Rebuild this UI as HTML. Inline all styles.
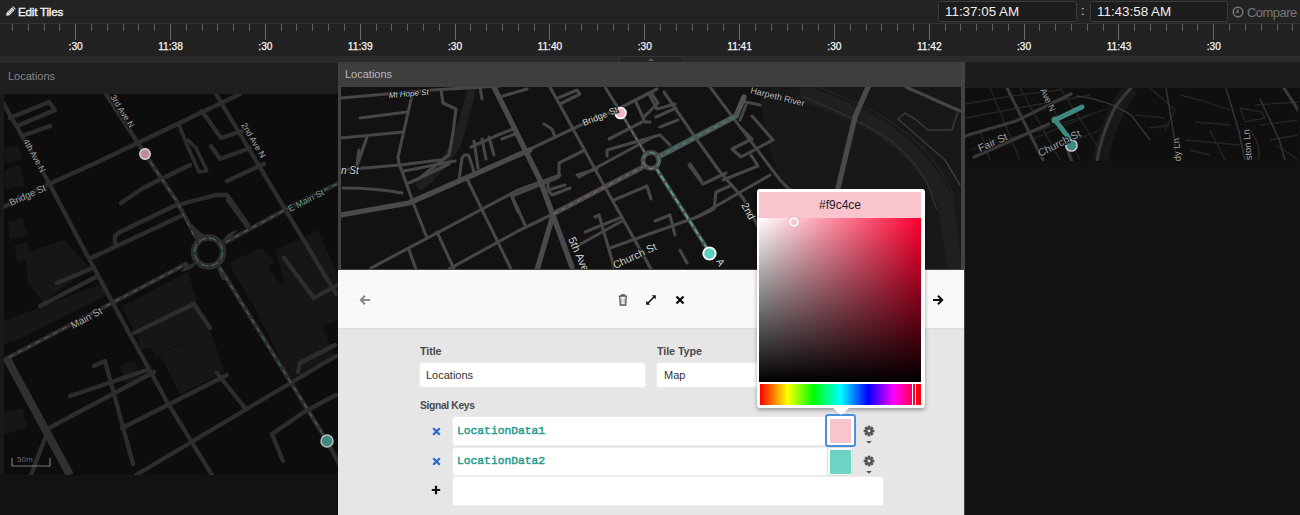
<!DOCTYPE html>
<html><head><meta charset="utf-8">
<style>
*{margin:0;padding:0;box-sizing:border-box}
html,body{width:1300px;height:515px;overflow:hidden;background:#1b1b1b;font-family:"Liberation Sans",sans-serif}
.a{position:absolute}
#hdr{left:0;top:0;width:1300px;height:23px;background:#232323}
#tl{left:0;top:23px;width:1300px;height:33px;background:#222;border-top:1px solid #333}
#band{left:0;top:56px;width:1300px;height:7px;background:#2b2b2b}
.tick{position:absolute;top:0;width:1px;height:7px;background:#5e5e5e}
.tick.M{height:16px;background:#6a6a6a}
.lbl{position:absolute;top:17px;font-size:10.2px;font-weight:normal;color:#f4f4f4;transform:translateX(-50%);-webkit-text-stroke:0.25px #f4f4f4}
.tbox{top:1px;height:21px;border:1px solid #3a3a3a;border-radius:2px;background:#1c1c1c;color:#eee;font-size:13.4px;padding:2px 0 0 6px}
#lp{left:0;top:63px;width:338px;height:452px;background:#121212}
#lph{left:0;top:63px;width:338px;height:31px;background:#1e1e1e}
#lmap{left:4px;top:94px;width:334px;height:381px;background:#0e0e0e;overflow:hidden}
#mp{left:338px;top:62px;width:627px;height:453px;background:#424242}
#mph{left:338px;top:62px;width:623px;height:25px;background:#3e3e3e}
#mmap{left:341px;top:87px;width:620px;height:182px;background:#121212;overflow:hidden}
#tb{left:338px;top:270px;width:626px;height:58px;background:#f9f9f9}
#form{left:338px;top:328px;width:626px;height:187px;background:#e6e6e6;box-shadow:inset 0 1px 0 #dcdcdc}
#rp{left:965px;top:62px;width:335px;height:453px;background:#121212}
#rph{left:965px;top:62px;width:335px;height:26px;background:#1d1d1d}
#rmap{left:967px;top:88px;width:333px;height:74px;background:#111;overflow:hidden}
.inp{background:#fff;border-radius:3px;box-shadow:0 0 0 1px #ececec}
.flbl{font-size:10.3px;font-weight:bold;color:#4a4a4a;letter-spacing:-0.1px}
.mono{font-family:"Liberation Mono",monospace;font-size:11.3px;font-weight:normal;color:#1f9a8c;-webkit-text-stroke:0.45px #1f9a8c}
</style></head><body>
<div id="hdr" class="a">
  <svg class="a" style="left:4px;top:5px" width="13" height="13" viewBox="0 0 13 13"><g transform="rotate(45 6.5 6.5)"><path d="M4.6 1 H8.4 V10 L6.5 12.6 L4.6 10 Z" fill="#eee"/><path d="M5.6 3.5 V9.5 M7.4 3.5 V9.5" stroke="#444" stroke-width="0.6"/><rect x="4.6" y="1.9" width="3.8" height="0.8" fill="#333"/></g></svg>
  <div class="a" style="left:18px;top:5px;font-size:11.6px;font-weight:normal;color:#f2f2f2;letter-spacing:-0.2px;-webkit-text-stroke:0.4px #f2f2f2">Edit Tiles</div>
  <div class="a tbox" style="left:938px;width:139px">11:37:05 AM</div>
  <div class="a" style="left:1081px;top:3px;font-size:13px;color:#ddd">:</div>
  <div class="a tbox" style="left:1090px;width:138px">11:43:58 AM</div>
  <svg class="a" style="left:1232px;top:6px" width="12" height="12" viewBox="0 0 12 12"><circle cx="6" cy="6" r="4.8" fill="none" stroke="#777" stroke-width="1.5"/><path d="M6 3.2 V6.2 H3.8" fill="none" stroke="#777" stroke-width="1.4"/></svg>
  <div class="a" style="left:1247px;top:5px;font-size:13px;color:#777;letter-spacing:-0.55px">Compare</div>
</div>
<div id="tl" class="a"><div class="tick" style="left:12px"></div><div class="tick" style="left:28px"></div><div class="tick" style="left:44px"></div><div class="tick" style="left:59px"></div><div class="tick M" style="left:75px"></div><div class="tick" style="left:91px"></div><div class="tick" style="left:107px"></div><div class="tick" style="left:123px"></div><div class="tick" style="left:138px"></div><div class="tick" style="left:154px"></div><div class="tick M" style="left:170px"></div><div class="tick" style="left:186px"></div><div class="tick" style="left:202px"></div><div class="tick" style="left:217px"></div><div class="tick" style="left:233px"></div><div class="tick" style="left:249px"></div><div class="tick M" style="left:265px"></div><div class="tick" style="left:281px"></div><div class="tick" style="left:296px"></div><div class="tick" style="left:312px"></div><div class="tick" style="left:328px"></div><div class="tick" style="left:344px"></div><div class="tick M" style="left:360px"></div><div class="tick" style="left:376px"></div><div class="tick" style="left:391px"></div><div class="tick" style="left:407px"></div><div class="tick" style="left:423px"></div><div class="tick" style="left:439px"></div><div class="tick M" style="left:455px"></div><div class="tick" style="left:470px"></div><div class="tick" style="left:486px"></div><div class="tick" style="left:502px"></div><div class="tick" style="left:518px"></div><div class="tick" style="left:534px"></div><div class="tick M" style="left:549px"></div><div class="tick" style="left:565px"></div><div class="tick" style="left:581px"></div><div class="tick" style="left:597px"></div><div class="tick" style="left:613px"></div><div class="tick" style="left:628px"></div><div class="tick M" style="left:644px"></div><div class="tick" style="left:660px"></div><div class="tick" style="left:676px"></div><div class="tick" style="left:692px"></div><div class="tick" style="left:707px"></div><div class="tick" style="left:723px"></div><div class="tick M" style="left:739px"></div><div class="tick" style="left:755px"></div><div class="tick" style="left:771px"></div><div class="tick" style="left:787px"></div><div class="tick" style="left:802px"></div><div class="tick" style="left:818px"></div><div class="tick M" style="left:834px"></div><div class="tick" style="left:850px"></div><div class="tick" style="left:866px"></div><div class="tick" style="left:881px"></div><div class="tick" style="left:897px"></div><div class="tick" style="left:913px"></div><div class="tick M" style="left:929px"></div><div class="tick" style="left:945px"></div><div class="tick" style="left:960px"></div><div class="tick" style="left:976px"></div><div class="tick" style="left:992px"></div><div class="tick" style="left:1008px"></div><div class="tick M" style="left:1024px"></div><div class="tick" style="left:1039px"></div><div class="tick" style="left:1055px"></div><div class="tick" style="left:1071px"></div><div class="tick" style="left:1087px"></div><div class="tick" style="left:1103px"></div><div class="tick M" style="left:1118px"></div><div class="tick" style="left:1134px"></div><div class="tick" style="left:1150px"></div><div class="tick" style="left:1166px"></div><div class="tick" style="left:1182px"></div><div class="tick" style="left:1197px"></div><div class="tick M" style="left:1213px"></div><div class="tick" style="left:1229px"></div><div class="tick" style="left:1245px"></div><div class="tick" style="left:1261px"></div><div class="tick" style="left:1277px"></div><div class="tick" style="left:1292px"></div><div class="lbl" style="left:75.7px">:30</div><div class="lbl" style="left:170.5px">11:38</div><div class="lbl" style="left:265.4px">:30</div><div class="lbl" style="left:360.2px">11:39</div><div class="lbl" style="left:455.1px">:30</div><div class="lbl" style="left:549.9px">11:40</div><div class="lbl" style="left:644.8px">:30</div><div class="lbl" style="left:739.6px">11:41</div><div class="lbl" style="left:834.4px">:30</div><div class="lbl" style="left:929.3px">11:42</div><div class="lbl" style="left:1024.1px">:30</div><div class="lbl" style="left:1119.0px">11:43</div><div class="lbl" style="left:1213.8px">:30</div></div>
<div id="band" class="a"></div>
<div class="a" style="left:619px;top:56px;width:65px;height:7px;background:#262626;border:1px solid #333;border-bottom:none"><div class="a" style="left:28px;top:1px;width:0;height:0;border-left:3px solid transparent;border-right:3px solid transparent;border-bottom:3px solid #555"></div></div>

<div id="lp" class="a"></div><div class="a" style="left:0;top:94px;width:4px;height:381px;background:#191919"></div>
<div id="lph" class="a"><div class="a" style="left:8px;top:7px;font-size:11px;color:#858585">Locations</div></div>
<div id="lmap" class="a" style="background:none"></div><!--LMAP--><svg class="a" style="left:0;top:0" width="338" height="475" viewBox="0 0 338 475">
<defs><clipPath id="lc"><rect x="4" y="94" width="334" height="381"/></clipPath></defs>
<g clip-path="url(#lc)">
<rect x="4" y="94" width="334" height="381" fill="#0e0d0d"/>
<g fill="#161616">
<path d="M141 333 L194 306 L209 330 L156 356 Z"/>
<path d="M160 355 L210 330 L225 372 L180 395 Z"/>
<path d="M251 300 L300 275 L335 356 L290 380 Z"/>
<path d="M275 250 L318 230 L338 275 L338 320 L300 335 Z"/>
<path d="M232 270 L262 256 L280 285 L250 300 Z"/>

<path d="M5 148 L18 146 L22 160 L5 163 Z"/>
<path d="M5 170 L20 165 L25 185 L5 190 Z"/>
<path d="M8 222 L22 218 L28 235 L10 240 Z"/>
<path d="M14 246 L28 242 L32 258 L18 262 Z"/>

<path d="M120 366 L135 360 L140 378 L125 384 Z"/>
<path d="M4 412 L22 408 L28 428 L4 434 Z"/>
<path d="M26 253 L64 240 L90 268 L43 302 L28 283 Z"/>
<path d="M4 321 L103 283 L107 295 L13 342 L4 344 Z"/>
<path d="M122 306 L188 272 L197 302 L133 330 Z"/>
<path d="M137 334 L192 308 L200 336 L141 350 Z"/>
<path d="M230 262 L262 248 L275 262 L240 285 Z"/>
</g>
<g fill="none" stroke="#2d2d2d" stroke-width="4.3" stroke-linecap="round" stroke-linejoin="round">
<path d="M2 101 L49 183 L79 240 L122 320 L166 400 L215 480"/>
<path d="M106 94 L145 154 L176 200 L196 237"/>
<path d="M0 209 L49 184 L100 161 L240 94"/>
<path d="M216 94 L336 294"/>
<path d="M10 118 L49 102 L55 110 L17 126"/>
<path d="M22 136 L50 126"/>
<path d="M202 111 L221 138 L248 129"/>
<path d="M211 146 L220 159 L250 148"/>
<path d="M227 181 L264 164"/>
<path d="M121 203 L143 188 L190 165"/>
<path d="M115 243 L115 236 L120 232 L174 206 L216 195 L227 195 L248 225"/>
<path d="M91 258 L181 216"/>
<path d="M57 283 L93 268"/>
<path d="M40 306 L96 277"/>
<path d="M228 200 L247 226"/>

<path d="M284 258 L314 298 L337 285"/>
<path d="M0 362 L186 264"/>
<path d="M134 333 L194 304 L210 328"/>
<path d="M49 428 L154 372"/>
<path d="M136 475 L336 356"/>
<path d="M122 428 L227 375"/>
<path d="M94 366 L105 361 L133 464"/>
<path d="M70 396 L147 370"/>
<path d="M217 373 L245 408"/>
<path d="M272 434 L304 412 L336 395"/>
<path d="M272 434 L283 461"/>
<path d="M300 363 L335 345"/>
<path d="M300 363 L298 372"/>
<path d="M220 268 L246 310 L327 441 L345 475"/>
<path d="M226 242 L292 206 L345 180"/>
<path d="M47 433 L31 475"/>
</g>
<path d="M7 359 L70 475" stroke="#303030" stroke-width="8" fill="none"/>
<g fill="none" stroke="#2d2d2d" stroke-width="3.5" stroke-linecap="round" stroke-linejoin="round">
<path d="M179 125 L187 145 L199 172 L207 171 L196 148 L188 140"/>
</g>
<circle cx="208.5" cy="252" r="14.5" fill="none" stroke="#2d2d2d" stroke-width="6.5"/>
<path d="M192 234 Q200 240 206 236 Q197 230 192 224 Z M222 242 Q226 232 238 230 L230 238 Z M216 266 Q222 270 228 280 L222 280 Z M196 262 Q194 270 180 272 L186 266 Z" fill="#2d2d2d"/>
<g fill="none" stroke-dasharray="5 5" stroke-width="1">
<path d="M0 362 L186 264" stroke="#6a6060"/>
<path d="M226 242 L292 206 L345 180" stroke="#3d7a72"/>
<path d="M220 268 L246 310 L327 441" stroke="#3d7a72"/>
<path d="M145 154 L176 200 L194 236" stroke="#6a5a5e"/>
</g>
<circle cx="208.5" cy="252" r="14" fill="none" stroke="#3d7a72" stroke-width="1" stroke-dasharray="8 3"/>
<circle cx="145" cy="154" r="5.2" fill="#c08d97" stroke="#d8d8d8" stroke-width="1.5"/>
<circle cx="327" cy="441" r="6" fill="#3d8a80" stroke="#bbb" stroke-width="1.5"/>
<g fill="#a8a8a8" font-size="9" font-family="Liberation Sans" stroke="#0e0e0e" stroke-width="2" paint-order="stroke">
<text transform="translate(11 206) rotate(-24)" font-size="9.5">Bridge St</text>
<text transform="translate(23 141) rotate(61)" font-size="8.5">4th Ave N</text>
<text transform="translate(110 97) rotate(58)" font-size="8.5">3rd Ave N</text>
<text transform="translate(241 125) rotate(59)" font-size="8.5">2nd Ave N</text>
<text transform="translate(73 329) rotate(-28)" fill="#b0b0b0" font-size="10">Main St</text>
<text transform="translate(290 212) rotate(-27)" fill="#7a9a96" font-size="9">E Main St</text>
</g>
<path d="M12 458 V466 H50 V458" fill="none" stroke="#777" stroke-width="1.2"/>
<text x="17" y="462" fill="#666" font-size="8" font-family="Liberation Sans">50m</text>
</g>
</svg>
<!--/LMAP-->


<div id="rp" class="a"></div>
<div id="rph" class="a"></div>
<div id="rmap" class="a"></div><!--RMAP--><svg class="a" style="left:0;top:0" width="1300" height="165" viewBox="0 0 1300 165">
<defs><clipPath id="rc"><rect x="965" y="88" width="333" height="73"/></clipPath></defs>
<g clip-path="url(#rc)">
<rect x="965" y="88" width="335" height="73" fill="#0f0f0f"/>
<path d="M1131 88 Q1110 115 1100 160" stroke="#181818" stroke-width="16" fill="none"/>
<g fill="none" stroke="#262626" stroke-width="1.3">
<path d="M965 104 L1010 96 L1060 90"/>
<path d="M965 118 L1040 104 L1090 95"/>
<path d="M970 150 L1050 127 L1110 108"/>
<path d="M1020 88 L1060 160"/>
<path d="M1042 88 L1080 160"/>
<path d="M1060 88 L1100 150"/>
<path d="M990 88 L1020 160"/>
<path d="M980 130 L990 160"/>
<path d="M1030 140 L1090 115"/>
<path d="M1040 155 L1100 130"/>
<path d="M1150 88 L1175 110 L1165 130"/>
<path d="M1180 95 L1200 100 L1230 110"/>
<path d="M1195 122 L1230 125"/>
<path d="M1185 140 L1240 145"/>
<path d="M1210 130 L1225 160"/>
<path d="M1240 108 L1262 112 L1265 118 L1245 122 L1240 108"/>
<path d="M1255 105 L1298 102"/>
<path d="M1260 125 L1298 120"/>
<path d="M1270 140 L1298 135"/>
<path d="M1250 130 Q1262 145 1258 160"/>
<path d="M1275 145 Q1285 150 1298 160"/>
<path d="M1135 115 L1165 118"/>
<path d="M1150 128 L1170 125"/>
<path d="M1190 150 L1210 155"/>
</g>
<g fill="none" stroke="#333" stroke-width="1.6">
<path d="M1166 88 L1174 136 L1176 160"/>
<path d="M1226 88 L1239 132 L1245 160"/>
<path d="M1260 99 L1279 139 L1285 160"/>
<path d="M1076 96 Q1110 100 1132 116 L1150 140"/>
</g>
<g fill="none" stroke="#393939" stroke-width="3.2" stroke-linecap="round">
<path d="M1007 88 L1044 162"/>
<path d="M965 136 L1016 121 L1071 94"/>
<path d="M974 157 L1049 124"/>
<path d="M1131 88 Q1115 105 1111 116 Q1100 140 1097 161"/>
<path d="M1284 88 L1298 110"/>
<path d="M1064 140 L1072 162"/>
</g>
<path d="M1082 107 L1055 120 L1069 138 L1071.5 145" stroke="#3f8a80" stroke-width="4.8" fill="none" stroke-linecap="round" stroke-linejoin="round"/>
<circle cx="1055" cy="120" r="3.6" fill="#3f8a80"/><circle cx="1071.5" cy="145.5" r="5.6" fill="#3f8a80" stroke="#ccc" stroke-width="1.5"/>
<g fill="#a0a0a0" font-size="10.5" font-family="Liberation Sans" stroke="#0f0f0f" stroke-width="2" paint-order="stroke">
<text transform="translate(980 152) rotate(-24)">Fair St</text>
<text transform="translate(1040 157) rotate(-27)">Church St</text>
<text transform="translate(1040 90) rotate(65)" font-size="9">Ave N</text>
<text transform="translate(1181 161) rotate(-95)" font-size="9.5">dy Ln</text>
<text transform="translate(1252 160) rotate(-95)" font-size="9.5">ston Ln</text>
</g>
</g>
</svg>
<!--/RMAP-->

<div id="mp" class="a"></div>
<div id="mph" class="a"><div class="a" style="left:7px;top:6px;font-size:11px;color:#b8b8b8">Locations</div></div>
<div id="mmap" class="a"></div><!--MMAP--><svg class="a" style="left:0;top:0" width="965" height="272" viewBox="0 0 965 272">
<defs><clipPath id="mc"><rect x="341" y="87" width="620" height="182"/></clipPath></defs>
<g clip-path="url(#mc)">
<rect x="341" y="87" width="620" height="182" fill="#121212"/>
<path d="M472 86 Q465 120 456 145 Q440 170 418 188" stroke="#1f1f1f" stroke-width="9" fill="none"/>
<path d="M760 87 L961 87 L961 269 L800 269 Q790 200 770 150 Q760 110 760 87 Z" fill="#181818"/>
<path d="M800 92 Q850 110 880 128 Q925 158 945 200 L955 269" stroke="#1f1f1f" stroke-width="16" fill="none"/>
<path d="M804 97 Q860 120 890 140 Q920 165 930 190 L937 210" stroke="#2e2e2e" stroke-width="1.5" fill="none"/>
<path d="M815 86 Q870 105 905 132 Q940 160 955 200" stroke="#242424" stroke-width="1.2" fill="none"/>
<g fill="none" stroke="#464646" stroke-width="3.1" stroke-linecap="round" stroke-linejoin="round">
<path d="M341 98 L432 90 L500 86"/>
<path d="M412 95 L398 157 L399 163 L414 205 L427 238"/>
<path d="M360 118 L407 112"/>
<path d="M341 138 L403 132"/>
<path d="M367 137 L357 166"/>
<path d="M341 170 L400 165 L440 160"/>
<path d="M343 188 Q375 188 402 193"/>
<path d="M404 171 L455 161"/>
<path d="M409 183 L449 164"/>
<path d="M441 90 L443 103 L456 109 L453 133 L449 155 L417 180"/>
<path d="M359 150 L357 164"/>
<path d="M459 180 L462 158 Q465 153 469 156 L474 172 M474 141 L478 168 M482 139 L486 159 M489 137 L494 155 M471 147 L498 135"/>
<path d="M480 87 L482 99"/>
<path d="M468 181 L511 269"/>
<path d="M371 268 L518 190 L560 175"/>
<path d="M528 150 L583 124 L618 109 L657 89"/>
<path d="M437 232 L454 269"/>
<path d="M409 250 L416 269"/>
<path d="M449 269 L518 231 L553 214"/>
<path d="M511 195 L518 212"/>
<path d="M503 96 L527 89"/>
<path d="M558 98 L577 90 L580 94 L560 104"/>
<path d="M544 124 L552 129 L555 137"/>
<path d="M498 135 L513 129"/>
<path d="M502 139 L515 134"/>
<path d="M550 87 L601 180 L651 269"/>
<path d="M559 177 L559 163 L585 150"/>
<path d="M579 177 L653 137"/>
<path d="M609 139 L642 122"/>
<path d="M607 156 L607 150 L660 135 L670 145"/>
<path d="M635 100 L645 122 L650 122"/>
<path d="M649 94 L657 109 L675 104"/>
<path d="M660 127 L678 120"/>
<path d="M512 196 L525 225"/>
<path d="M512 196 L557 178"/>
<path d="M548 180 L548 190 L565 185 M548 190 L552 195 L570 188"/>
<path d="M614 200 L647 186 L651 199"/>
<path d="M577 175 L597 169"/>
<path d="M577 246 L622 221"/>
<path d="M585 232 L622 217"/>
<path d="M595 217 L599 215 L614 267"/>
<path d="M610 248 L697 217 L770 175"/>
<path d="M655 221 L670 215 L675 235"/>
<path d="M697 217 L714 209 L716 192 L730 186"/>
<path d="M680 250 L687 263"/>
<path d="M689 165 L703 184 L726 173"/>
<path d="M664 92 L695 137 L720 172 L743 198 L760 230"/>
<path d="M710 87 L780 180 L800 200"/>
<path d="M746 105 L740 120"/>
<path d="M745 102 L760 105"/>
<path d="M752 116 L773 140 L741 157 L732 149 L752 139 L740 127"/>
<path d="M751 155 L758 166 L723 180"/>
<path d="M690 164 L701 180"/>
<path d="M640 98 L651 92 M651 92 L658 103 L651 110 L644 117 M656 117 L676 108"/>
<path d="M906 87 L960 111"/>
<path d="M898 119 L905 113 L915 119 L928 130 L952 130 L958 111" stroke="#3a3a3a" stroke-width="1.5"/><path d="M898 119 L945 160 L960 185" stroke="#3a3a3a" stroke-width="1.5"/>

</g>
<g fill="none" stroke="#4a4a4a" stroke-width="5.3" stroke-linecap="round" stroke-linejoin="round">
<path d="M494 87 L540 180 L572 267"/>
<path d="M341 215 L409 203 L518 155 L530 150"/>
<path d="M553 215 L537 270"/>
<path d="M868 87 L855 117 L838 188 L834 200"/>
</g>
<path d="M553 214 L643 167" stroke="#4a4848" stroke-width="5" fill="none"/>
<path d="M553 214 L643 167" stroke="#8a7378" stroke-width="1" stroke-dasharray="5 4" fill="none"/>
<path d="M605 87 L621 113 L645 153" stroke="#4a4848" stroke-width="3" fill="none"/>
<path d="M621 113 L645 153" stroke="#8a7378" stroke-width="1" stroke-dasharray="4 3" fill="none"/>
<path d="M658 157 L736 116 L744 97" stroke="#4d5554" stroke-width="5.5" fill="none" stroke-linecap="round"/>
<path d="M658 157 L736 116" stroke="#3f8a80" stroke-width="1.2" stroke-dasharray="5 4" fill="none"/>
<path d="M656 168 L710 253" stroke="#4d5554" stroke-width="4" fill="none"/>
<path d="M656 168 L710 253" stroke="#55b8a8" stroke-width="1.2" stroke-dasharray="6 3" fill="none"/>
<circle cx="651" cy="160.5" r="8" fill="none" stroke="#4a4a4a" stroke-width="5"/>
<circle cx="651" cy="160.5" r="8" fill="none" stroke="#5a9a90" stroke-width="1" stroke-dasharray="6 3"/>
<circle cx="620.5" cy="113" r="5.5" fill="#f4b8c4" stroke="#fff" stroke-width="1.6"/>
<circle cx="709.5" cy="253.5" r="6.2" fill="#5ccfc0" stroke="#fff" stroke-width="1.8"/>
<g fill="#d4d4d4" font-size="8.5" font-family="Liberation Sans" stroke="#111" stroke-width="2" paint-order="stroke">
<text transform="translate(389 98) rotate(-5)" font-style="italic" font-size="8">Mt Hope St</text>
<text x="341" y="174" font-size="10" font-style="italic">n St</text>
<text transform="translate(584 126) rotate(-22)" font-size="9">Bridge St</text>
<text transform="translate(750 93) rotate(14)" font-size="9" fill="#bbb">Harpeth River</text>
<text transform="translate(568 239) rotate(66)" font-size="11">5th Ave</text>
<text transform="translate(615 269) rotate(-25)" font-size="10.5">Church St</text>
<text transform="translate(741 205) rotate(62)" font-size="10.5">2nd</text>
<text transform="translate(716 261) rotate(62)" font-size="10">A</text>
</g>
</g>
</svg>
<!--/MMAP-->
<div id="tb" class="a">
  <svg class="a" style="left:21px;top:24px" width="12" height="12" viewBox="0 0 12 12"><path d="M11 6 H2 M6 1.8 L1.8 6 L6 10.2" fill="none" stroke="#888" stroke-width="2"/></svg>
  <svg class="a" style="left:280px;top:24px" width="10" height="12" viewBox="0 0 10 12"><path d="M3.5 1.5 V0.8 H6.5 V1.5 M0.8 2.2 H9.2 M1.8 2.5 L2.3 11 H7.7 L8.2 2.5" fill="none" stroke="#555" stroke-width="1.3"/><path d="M3.8 4.5 V9.5 M6.2 4.5 V9.5" stroke="#999" stroke-width="0.9"/></svg>
  <svg class="a" style="left:307px;top:24px" width="12" height="12" viewBox="0 0 12 12"><path d="M2.5 9.5 L9.5 2.5" stroke="#111" stroke-width="1.6"/><path d="M6.8 1.2 H10.8 V5.2 Z M1.2 6.8 V10.8 H5.2 Z" fill="#111"/></svg>
  <svg class="a" style="left:337px;top:25px" width="10" height="10" viewBox="0 0 10 10"><path d="M1.5 1.5 L8.5 8.5 M8.5 1.5 L1.5 8.5" stroke="#111" stroke-width="2.3"/></svg>
  <svg class="a" style="left:594px;top:24px" width="12" height="12" viewBox="0 0 12 12"><path d="M1 6 H10 M6 1.8 L10.2 6 L6 10.2" fill="none" stroke="#111" stroke-width="2"/></svg>
</div>
<div id="form" class="a">
  <div class="a flbl" style="left:82px;top:17px;font-size:10.8px">Title</div>
  <div class="a inp" style="left:82px;top:35px;width:225px;height:24px"><div class="a" style="left:6px;top:6px;font-size:11px;color:#333">Locations</div></div>
  <div class="a flbl" style="left:319px;top:17px;font-size:10.8px">Tile Type</div>
  <div class="a inp" style="left:319px;top:35px;width:120px;height:24px"><div class="a" style="left:7px;top:6px;font-size:11px;color:#333">Map</div></div>
  <div class="a flbl" style="left:82px;top:72px;letter-spacing:-0.35px">Signal Keys</div>
  <svg class="a" style="left:94px;top:99px" width="9" height="9" viewBox="0 0 9 9"><path d="M1.2 1.2 L7.8 7.8 M7.8 1.2 L1.2 7.8" stroke="#2a6ad0" stroke-width="2.2"/></svg>
  <svg class="a" style="left:94px;top:129px" width="9" height="9" viewBox="0 0 9 9"><path d="M1.2 1.2 L7.8 7.8 M7.8 1.2 L1.2 7.8" stroke="#2a6ad0" stroke-width="2.2"/></svg>
  <svg class="a" style="left:93px;top:157px" width="10" height="10" viewBox="0 0 10 10"><path d="M5 0.8 V9.2 M0.8 5 H9.2" stroke="#111" stroke-width="2.2"/></svg>
  <div class="a inp" style="left:115px;top:89px;width:375px;height:28px"><div class="a mono" style="left:4px;top:8px">LocationData1</div></div>
  <div class="a inp" style="left:115px;top:120px;width:375px;height:27px"><div class="a mono" style="left:4px;top:7px">LocationData2</div></div>
  <div class="a inp" style="left:115px;top:149px;width:430px;height:28px"></div>
  <div class="a" style="left:487px;top:86px;width:31px;height:33px;border:2px solid #4a8fe0;border-radius:3px;background:#fff"><div class="a" style="left:3px;top:3px;width:21px;height:24px;background:#f9c4ce"></div></div>
  <div class="a" style="left:489px;top:119px;width:26px;height:29px;border:1px solid #ddd;border-radius:3px;background:#fff"><div class="a" style="left:2px;top:2px;width:21px;height:24px;background:#6cd4c4"></div></div>
  <svg class="a" style="left:525px;top:97px" width="12" height="21" viewBox="0 0 12 21"><g transform="translate(6 6)" fill="#555"><circle r="3.6"/><g><rect x="-1.3" y="-5.3" width="2.6" height="3" /><rect x="-1.3" y="-5.3" width="2.6" height="3" transform="rotate(45)"/><rect x="-1.3" y="-5.3" width="2.6" height="3" transform="rotate(90)"/><rect x="-1.3" y="-5.3" width="2.6" height="3" transform="rotate(135)"/><rect x="-1.3" y="-5.3" width="2.6" height="3" transform="rotate(180)"/><rect x="-1.3" y="-5.3" width="2.6" height="3" transform="rotate(225)"/><rect x="-1.3" y="-5.3" width="2.6" height="3" transform="rotate(270)"/><rect x="-1.3" y="-5.3" width="2.6" height="3" transform="rotate(315)"/></g></g><circle cx="6" cy="6" r="1.4" fill="#e6e6e6"/><path d="M3.2 16 H8.8 L6 18.8 Z" fill="#555"/></svg>
  <svg class="a" style="left:525px;top:127px" width="12" height="21" viewBox="0 0 12 21"><g transform="translate(6 6)" fill="#555"><circle r="3.6"/><g><rect x="-1.3" y="-5.3" width="2.6" height="3" /><rect x="-1.3" y="-5.3" width="2.6" height="3" transform="rotate(45)"/><rect x="-1.3" y="-5.3" width="2.6" height="3" transform="rotate(90)"/><rect x="-1.3" y="-5.3" width="2.6" height="3" transform="rotate(135)"/><rect x="-1.3" y="-5.3" width="2.6" height="3" transform="rotate(180)"/><rect x="-1.3" y="-5.3" width="2.6" height="3" transform="rotate(225)"/><rect x="-1.3" y="-5.3" width="2.6" height="3" transform="rotate(270)"/><rect x="-1.3" y="-5.3" width="2.6" height="3" transform="rotate(315)"/></g></g><circle cx="6" cy="6" r="1.4" fill="#e6e6e6"/><path d="M3.2 16 H8.8 L6 18.8 Z" fill="#555"/></svg>
</div>
<div class="a" style="left:757px;top:189px;width:168px;height:219px;background:#fff;border-radius:3px;box-shadow:0 2px 4px rgba(0,0,0,0.35)">
  <div class="a" style="left:2px;top:3px;width:162px;height:26px;background:#f9c4ce;text-align:center;font-size:12px;color:#222;line-height:26px">#f9c4ce</div>
  <div class="a" style="left:2px;top:29px;width:162px;height:164px;background:linear-gradient(to top,#000,rgba(0,0,0,0)),linear-gradient(to right,#fff,#ff0030)"></div>
  <div class="a" style="left:32px;top:28px;width:10px;height:10px;border:2.5px solid #fff;border-radius:50%;background:#f9c4ce;box-shadow:0 0 1px rgba(0,0,0,.4)"></div>
  <div class="a" style="left:3px;top:195px;width:161px;height:21px;background:linear-gradient(to right,#f00 0%,#ff0 17%,#0f0 33%,#0ff 50%,#00f 67%,#f0f 83%,#f00 100%)"></div>
  <div class="a" style="left:155px;top:194px;width:4px;height:23px;border:1px solid #fff"></div>
  <div class="a" style="left:76px;top:219px;width:0;height:0;border-left:8px solid transparent;border-right:8px solid transparent;border-top:7px solid #fff"></div>
</div>
</body></html>
